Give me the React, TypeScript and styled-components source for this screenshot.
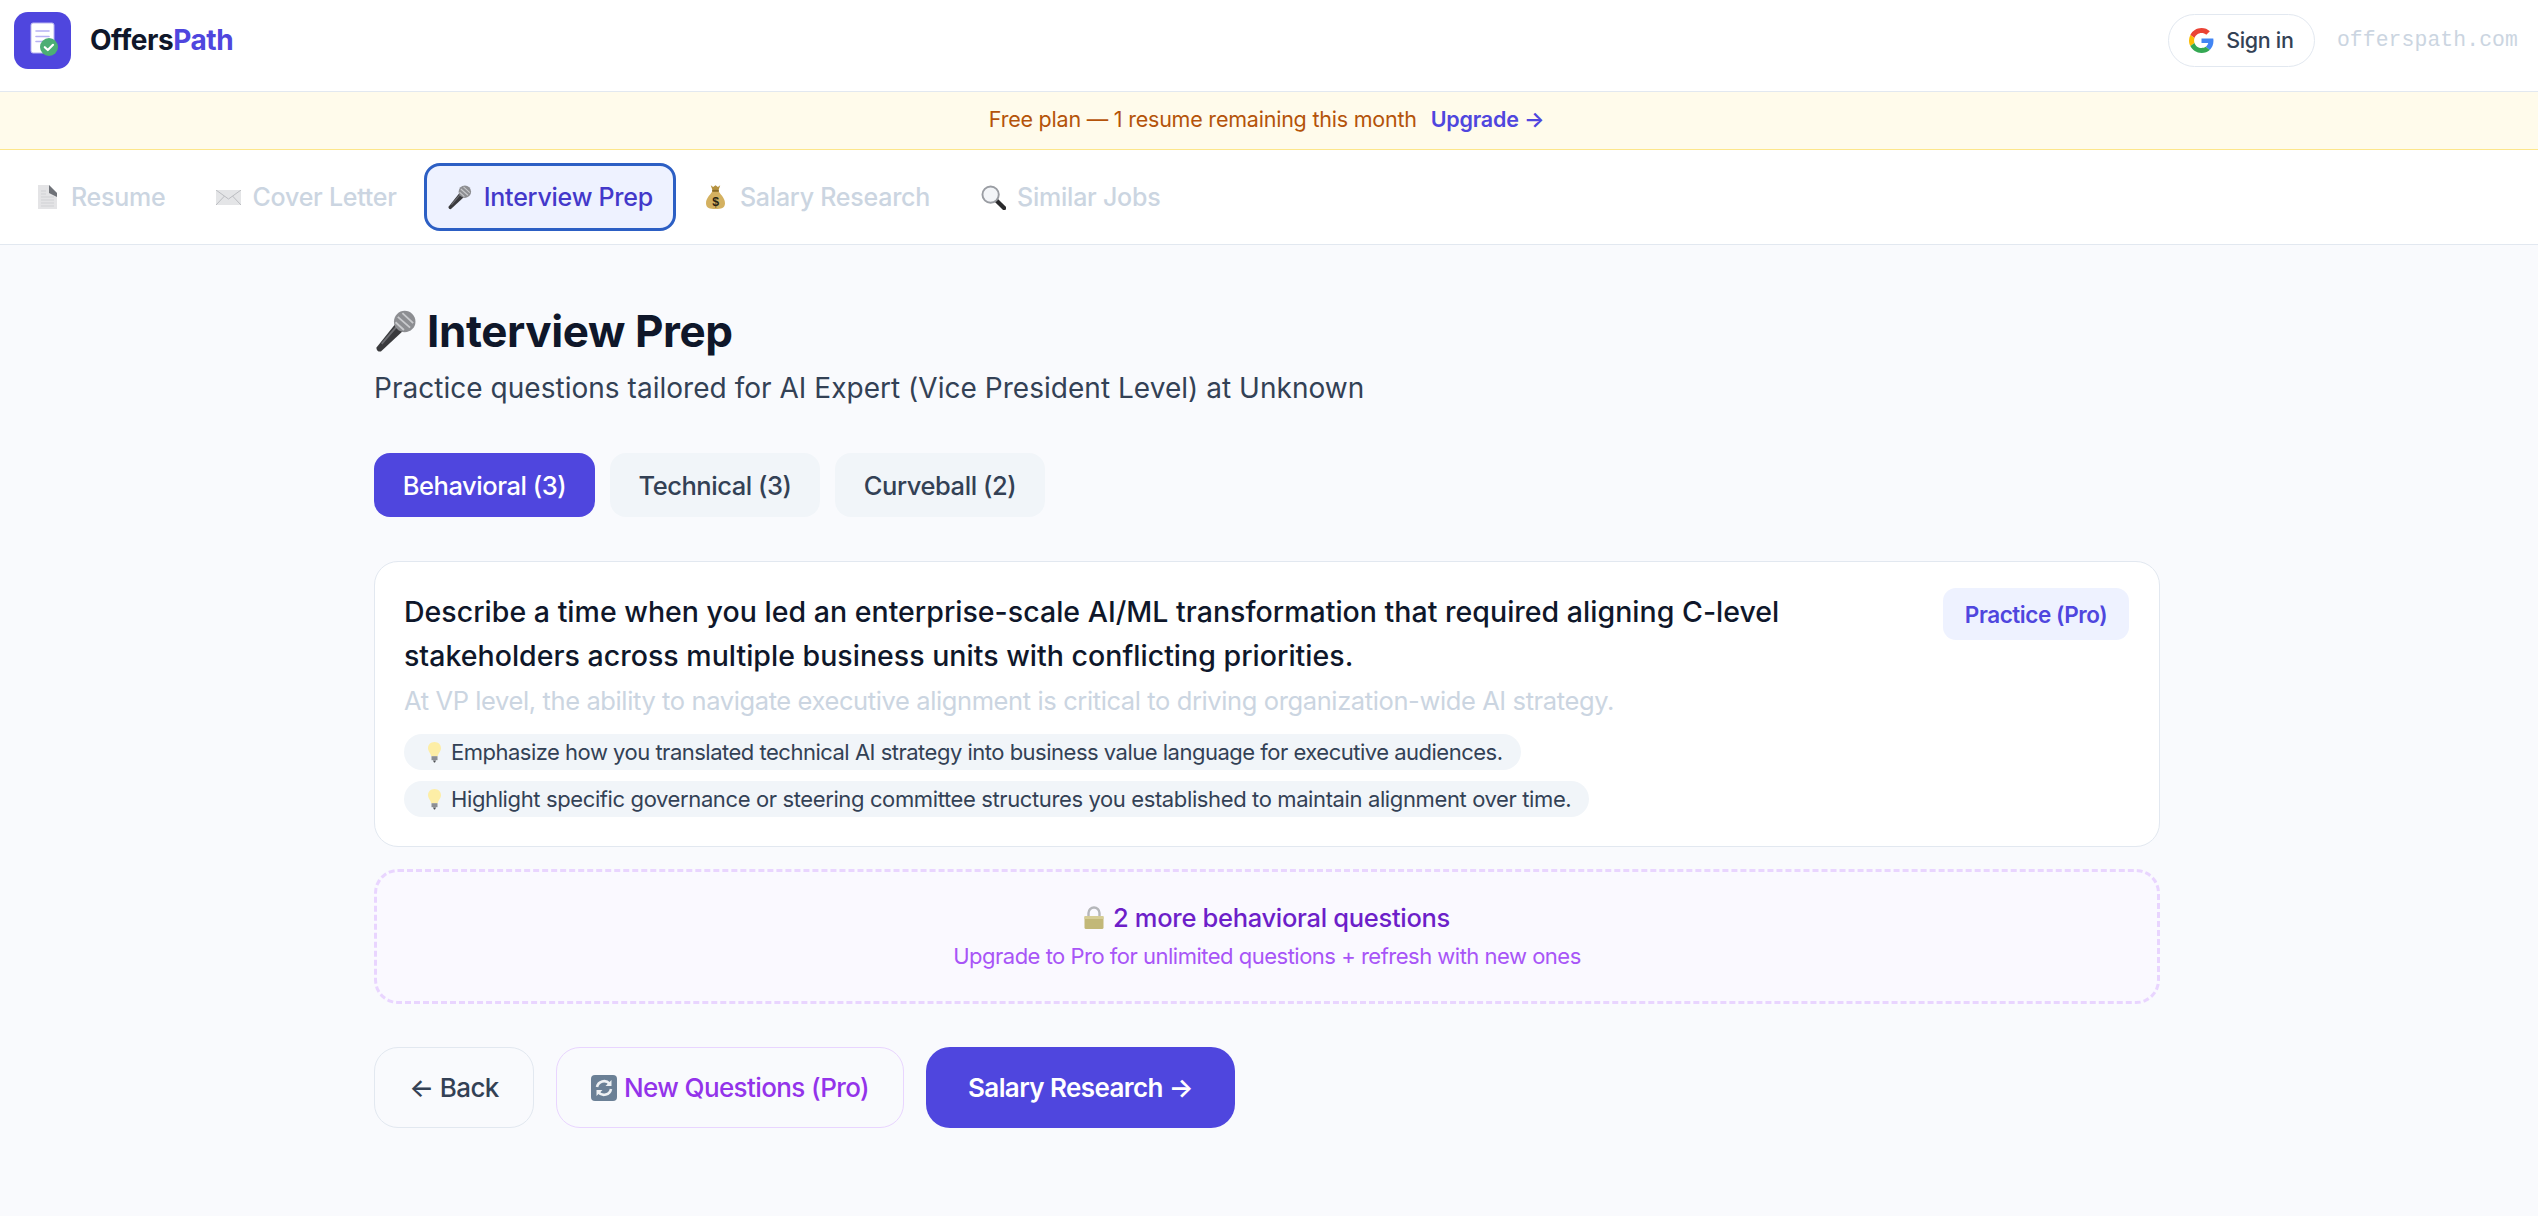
import React from "react";
import styled, { createGlobalStyle } from "styled-components";

const Global = createGlobalStyle`
  html, body { margin: 0; padding: 0; background: #f9fafd; }
  body { font-family: Inter, "Noto Sans", sans-serif; color: #0f172a; }
  * { box-sizing: border-box; }
`;
const Page = styled.div`
  min-height: 1216px;
  display: flex;
  flex-direction: column;
  background: #f9fafd;
`;
const Header = styled.header`
  height: 92px;
  background: #fff;
  border-bottom: 1px solid #e2e8f0;
  display: flex;
  align-items: center;
  justify-content: space-between;
  padding: 0 20px 11px 14px;
`;
const Brand = styled.div`
  display: flex;
  align-items: center;
  gap: 19px;
`;
const BrandName = styled.div`
  font-size: 28px;
  font-weight: 700;
  letter-spacing: -0.45px;
  color: #0f172a;
  span { color: #4f46de; }
`;
const HeaderRight = styled.div`
  display: flex;
  align-items: center;
  gap: 22px;
`;
const SignIn = styled.button`
  height: 53px;
  width: 147px;
  border: 1.5px solid #e2e8f0;
  border-radius: 27px;
  background: #fff;
  display: flex;
  align-items: center;
  justify-content: center;
  gap: 12px;
  font: 500 21.5px Inter, sans-serif;
  letter-spacing: -0.35px;
  color: #334155;
`;
const Domain = styled.div`
  font: 400 21.4px "Liberation Mono", monospace;
  letter-spacing: 0.1px;
  color: #cbd5e1;
`;
const Banner = styled.div`
  height: 58px;
  background: #fffbeb;
  border-bottom: 1px solid #fde68a;
  display: flex;
  align-items: center;
  justify-content: center;
  gap: 14px;
  padding: 0 5px 3px 0;
  font-size: 21.5px;
  letter-spacing: -0.22px;
  color: #b45309;
`;
const UpgradeLink = styled.a`
  font-weight: 600;
  color: #4f46de;
`;
const Nav = styled.nav`
  height: 95px;
  background: #fff;
  border-bottom: 1px solid #e2e8f0;
  display: flex;
  align-items: center;
  padding: 0 11px;
  gap: 4px;
`;
const NavItem = styled.div<{ $active?: boolean }>`
  height: 68px;
  display: flex;
  align-items: center;
  gap: 8px;
  padding: 0 20px 0 17px;
  border-radius: 16px;
  font-size: 25px;
  font-weight: 500;
  letter-spacing: -0.24px;
  color: ${(p) => (p.$active ? "#4338ca" : "#cbd5e1")};
  background: ${(p) => (p.$active ? "#eef2ff" : "transparent")};
  border: ${(p) => (p.$active ? "3px solid #2c5fc4" : "3px solid transparent")};
`;
const EmojiSlot = styled.span`
  width: 32px;
  height: 32px;
  flex: none;
  display: flex;
  align-items: center;
  justify-content: center;
`;
const Main = styled.main`
  width: 1786px;
  margin-left: 374px;
  padding-top: 58px;
  display: flex;
  flex-direction: column;
`;
const Title = styled.h1`
  margin: 0;
  display: flex;
  align-items: center;
  gap: 10px;
  height: 56px;
  font-size: 44px;
  font-weight: 700;
  letter-spacing: -0.4px;
  color: #0f172a;
`;
const Subtitle = styled.p`
  margin: 9px 0 0;
  font-size: 28px;
  line-height: 40px;
  letter-spacing: 0.03px;
  color: #334155;
`;
const Tabs = styled.div`
  display: flex;
  gap: 15px;
  margin-top: 45px;
`;
const Tab = styled.button<{ $active?: boolean; $w: number }>`
  height: 64px;
  width: ${(p) => p.$w}px;
  border: 0;
  border-radius: 16px;
  font: 500 25.5px Inter, sans-serif;
  letter-spacing: -0.45px;
  background: ${(p) => (p.$active ? "#4f46de" : "#f1f5f9")};
  color: ${(p) => (p.$active ? "#fff" : "#334155")};
`;
const Card = styled.section`
  margin-top: 44px;
  height: 286px;
  background: #fff;
  border: 1.5px solid #e2e8f0;
  border-radius: 24px;
  padding: 28px 29px 0;
  position: relative;
`;
const Question = styled.div`
  width: 1440px;
  font-size: 28.5px;
  font-weight: 500;
  line-height: 44px;
  letter-spacing: 0.02px;
  color: #0f172a;
`;
const Practice = styled.button`
  position: absolute;
  right: 30px;
  top: 26px;
  width: 186px;
  height: 52px;
  border: 0;
  border-radius: 13px;
  background: #eef2ff;
  color: #4f46de;
  font: 600 22.5px Inter, sans-serif;
  letter-spacing: -0.45px;
`;
const Why = styled.div`
  margin-top: 4px;
  font-size: 25.5px;
  font-weight: 400;
  line-height: 38px;
  letter-spacing: -0.39px;
  color: #cbd5e1;
`;
const Tips = styled.div`
  margin-top: 14px;
  display: flex;
  flex-direction: column;
  align-items: flex-start;
  gap: 11px;
`;
const Tip = styled.div<{ $tracking: number }>`
  height: 36px;
  display: flex;
  align-items: center;
  gap: 9px;
  padding: 0 18px 0 23px;
  background: #f1f5f9;
  border-radius: 18px;
  font-size: 22px;
  letter-spacing: ${(p) => p.$tracking}px;
  color: #334155;
`;
const Locked = styled.div`
  margin-top: 22px;
  height: 135px;
  border: 3px dashed #e9d5ff;
  border-radius: 24px;
  background: #faf9ff;
  display: flex;
  flex-direction: column;
  align-items: center;
  justify-content: center;
  gap: 3px;
  padding-bottom: 3px;
`;
const LockedTitle = styled.div`
  display: flex;
  align-items: center;
  gap: 9px;
  font-size: 25.5px;
  font-weight: 500;
  letter-spacing: -0.3px;
  line-height: 38px;
  color: #6d1fc9;
`;
const LockedSub = styled.div`
  font-size: 22px;
  line-height: 32px;
  letter-spacing: -0.5px;
  color: #a855f7;
`;
const Actions = styled.div`
  margin-top: 43px;
  display: flex;
  gap: 22px;
`;
const ActionButton = styled.button<{ $w: number; $kind: "back" | "pro" | "next" }>`
  height: 81px;
  width: ${(p) => p.$w}px;
  border-radius: 24px;
  display: flex;
  align-items: center;
  justify-content: center;
  gap: 7px;
  font: ${(p) => (p.$kind === "next" ? 600 : 500)} 26px Inter, sans-serif;
  letter-spacing: -0.6px;
  background: ${(p) => (p.$kind === "next" ? "#4f46de" : "transparent")};
  color: ${(p) => (p.$kind === "next" ? "#fff" : p.$kind === "pro" ? "#9333ea" : "#334155")};
  border: ${(p) =>
    p.$kind === "next" ? "0" : p.$kind === "pro" ? "1.5px solid #e9d5ff" : "1.5px solid #e2e8f0"};
`;

const Logo = () => (
  <svg width="57" height="57" viewBox="0 0 57 57">
    <rect width="57" height="57" rx="14" fill="#4f46de" />
    <rect x="17" y="11" width="23" height="30" rx="2" fill="#fff" stroke="#b9b5f2" strokeWidth="1" />
    <path d="M22 19h13M22 24.5h13M22 29.5h7" stroke="#b6b1f3" strokeWidth="1.6" strokeLinecap="round" />
    <circle cx="35" cy="35" r="9" fill="#4cae74" />
    <path d="M30.8 35.2l3 2.8 5.2-5.2" stroke="#fff" strokeWidth="2.2" fill="none" strokeLinecap="round" strokeLinejoin="round" />
  </svg>
);
const GoogleG = () => (
  <svg width="25" height="25" viewBox="0 0 48 48">
    <path fill="#EA4335" d="M24 9.5c3.54 0 6.71 1.22 9.21 3.6l6.85-6.85C35.9 2.38 30.47 0 24 0 14.62 0 6.51 5.38 2.56 13.22l7.98 6.19C12.43 13.72 17.74 9.5 24 9.5z" />
    <path fill="#4285F4" d="M46.98 24.55c0-1.57-.15-3.09-.38-4.55H24v9.02h12.94c-.58 2.96-2.26 5.48-4.78 7.18l7.73 6c4.51-4.18 7.09-10.36 7.09-17.65z" />
    <path fill="#FBBC05" d="M10.53 28.59c-.48-1.45-.76-2.99-.76-4.59s.27-3.14.76-4.59l-7.98-6.19C.92 16.46 0 20.12 0 24c0 3.88.92 7.54 2.56 10.78l7.97-6.19z" />
    <path fill="#34A853" d="M24 48c6.48 0 11.93-2.13 15.89-5.81l-7.73-6c-2.15 1.45-4.92 2.3-8.16 2.3-6.26 0-11.57-4.22-13.47-9.91l-7.98 6.19C6.51 42.62 14.62 48 24 48z" />
  </svg>
);
const DocEmoji = () => (
  <svg width="21" height="24" viewBox="0 0 21 24">
    <path d="M1 0h11l8 8v16H1z" fill="#e4e4e6" />
    <path d="M12 0l8 8v4l-8-4z" fill="#6f7278" />
    <path d="M4 12h13M4 15h13M4 18h13M4 21h13M4 6h5M4 9h5" stroke="#d0d1d4" strokeWidth="1" />
  </svg>
);
const MailEmoji = () => (
  <svg width="25" height="15" viewBox="0 0 25 15">
    <rect width="25" height="15" fill="#e4e5e7" />
    <path d="M0 0l12.5 9L25 0M0 15l8.5-9M25 15l-8.5-9" stroke="#bbbdc1" strokeWidth="1" fill="none" />
  </svg>
);
const MicEmoji = ({ size }: { size: number }) => (
  <svg width={size} height={size} viewBox="0 0 28 28">
    <path d="M1.5 24.5 L14 9 L19 13.5 L4.5 27 Q2 27.5 1.5 24.5z" fill="#3a3a3d" />
    <path d="M5 22 L15 10.5" stroke="#6d6d72" strokeWidth="1.2" />
    <circle cx="20" cy="7.5" r="7" fill="#8d8e92" />
    <path d="M15.5 4.5l8 7M18.5 2l7 6.5M14 8l5.5 5" stroke="#c9cacd" strokeWidth="1.2" />
  </svg>
);
const BagEmoji = () => (
  <svg width="19" height="24" viewBox="0 0 20 25">
    <path d="M5 0l2.5 2L10 0l2.5 2L15 0l-2 6H7z" fill="#b5923f" />
    <path d="M7 6h6c1 3 7 7 7 13 0 5-4 6-10 6s-10-1-10-6c0-6 6-10 7-13z" fill="#d4b160" />
    <rect x="6.5" y="5" width="7" height="2" fill="#8b6c26" />
    <text x="10" y="22" fontSize="13" fontWeight="700" textAnchor="middle" fill="#2b2414" fontFamily="Liberation Sans">$</text>
  </svg>
);
const LensEmoji = () => (
  <svg width="25" height="25" viewBox="0 0 26 26">
    <path d="M15 15l9 9" stroke="#2a2a2c" strokeWidth="4.5" strokeLinecap="round" />
    <circle cx="10" cy="10" r="8.5" fill="#f3f5f8" stroke="#9a9da3" strokeWidth="2" />
  </svg>
);
const BulbEmoji = () => (
  <svg width="15" height="22" viewBox="0 0 15 22">
    <path d="M7.5 1C3.6 1 1 3.8 1 7.2c0 3.2 2.6 4.6 3.2 8h6.6c.6-3.4 3.2-4.8 3.2-8C14 3.8 11.4 1 7.5 1z" fill="#fdeea6" />
    <rect x="4.5" y="15.2" width="6" height="4" fill="#8c8f94" />
    <path d="M6 19.5h3L8 21.5H7z" fill="#4b4d51" />
  </svg>
);
const LockEmoji = () => (
  <svg width="20" height="23" viewBox="0 0 20 23">
    <path d="M4.5 11V7a5.5 5.5 0 0 1 11 0v4" stroke="#b5b7ba" strokeWidth="2.4" fill="none" />
    <rect x="0.5" y="10" width="19" height="13" rx="1.5" fill="#c2b878" />
    <rect x="0.5" y="10" width="19" height="3" fill="#d6cd95" />
  </svg>
);
const RefreshEmoji = () => (
  <svg width="26" height="26" viewBox="0 0 26 26">
    <rect width="26" height="26" rx="4" fill="#6b8096" />
    <path d="M6 12a7.2 7.2 0 0 1 12.5-3.4" stroke="#eef1f4" strokeWidth="2.6" fill="none" />
    <path d="M20.5 5v6h-6z" fill="#eef1f4" />
    <path d="M20 14a7.2 7.2 0 0 1-12.5 3.4" stroke="#eef1f4" strokeWidth="2.6" fill="none" />
    <path d="M5.5 21v-6h6z" fill="#eef1f4" />
  </svg>
);

export default function App() {
  return (
    <Page>
      <Global />
      <Header>
        <Brand>
          <Logo />
          <BrandName>Offers<span>Path</span></BrandName>
        </Brand>
        <HeaderRight>
          <SignIn><GoogleG />Sign in</SignIn>
          <Domain>offerspath.com</Domain>
        </HeaderRight>
      </Header>
      <Banner>
        <span>Free plan — 1 resume remaining this month</span>
        <UpgradeLink>Upgrade →</UpgradeLink>
      </Banner>
      <Nav>
        <NavItem><EmojiSlot><DocEmoji /></EmojiSlot>Resume</NavItem>
        <NavItem><EmojiSlot><MailEmoji /></EmojiSlot>Cover Letter</NavItem>
        <NavItem $active><EmojiSlot><MicEmoji size={25} /></EmojiSlot>Interview Prep</NavItem>
        <NavItem><EmojiSlot><BagEmoji /></EmojiSlot>Salary Research</NavItem>
        <NavItem><EmojiSlot><LensEmoji /></EmojiSlot>Similar Jobs</NavItem>
      </Nav>
      <Main>
        <Title><MicEmoji size={43} />Interview Prep</Title>
        <Subtitle>Practice questions tailored for AI Expert (Vice President Level) at Unknown</Subtitle>
        <Tabs>
          <Tab $active $w={221}>Behavioral (3)</Tab>
          <Tab $w={210}>Technical (3)</Tab>
          <Tab $w={210}>Curveball (2)</Tab>
        </Tabs>
        <Card>
          <Question>Describe a time when you led an enterprise-scale AI/ML transformation that required aligning C-level stakeholders across multiple business units with conflicting priorities.</Question>
          <Practice>Practice (Pro)</Practice>
          <Why>At VP level, the ability to navigate executive alignment is critical to driving organization-wide AI strategy.</Why>
          <Tips>
            <Tip $tracking={-0.5}><BulbEmoji />Emphasize how you translated technical AI strategy into business value language for executive audiences.</Tip>
            <Tip $tracking={-0.38}><BulbEmoji />Highlight specific governance or steering committee structures you established to maintain alignment over time.</Tip>
          </Tips>
        </Card>
        <Locked>
          <LockedTitle><LockEmoji />2 more behavioral questions</LockedTitle>
          <LockedSub>Upgrade to Pro for unlimited questions + refresh with new ones</LockedSub>
        </Locked>
        <Actions>
          <ActionButton $kind="back" $w={160}>← Back</ActionButton>
          <ActionButton $kind="pro" $w={348}><RefreshEmoji />New Questions (Pro)</ActionButton>
          <ActionButton $kind="next" $w={309}>Salary Research →</ActionButton>
        </Actions>
      </Main>
    </Page>
  );
}
